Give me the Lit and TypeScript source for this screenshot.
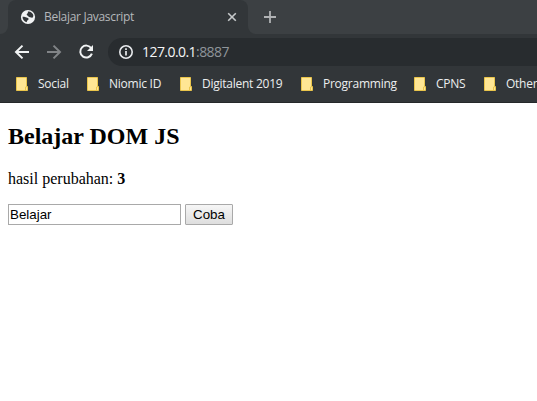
import { LitElement, html, css, svg } from "lit";
import { customElement } from "lit/decorators.js";

const folders = [
  { name: "Social", width: 71 },
  { name: "Niomic ID", width: 93 },
  { name: "Digitalent 2019", width: 121 },
  { name: "Programming", width: 113 },
  { name: "CPNS", width: 70 },
  { name: "Other", width: 53 },
];

const icon = (cls: string, box: number, body: unknown) =>
  html`<svg class=${cls} width=${box} height=${box} viewBox="0 0 ${box} ${box}" fill="none">${body}</svg>`;

@customElement("browser-chrome")
class BrowserChrome extends LitElement {
  static styles = css`
    :host { display: block; height: 103px; box-sizing: border-box; background: #323639; border-bottom: 1px solid #25282a; font: 12px/16px "Open Sans", "Noto Sans", sans-serif; overflow: hidden; }
    svg { display: block; flex: none; }
    .tabs { display: flex; height: 34px; background: #323639; }
    .before { width: 8px; background: #3c4043; border-bottom-right-radius: 8px; }
    .tab { width: 240px; box-sizing: border-box; display: flex; align-items: center; padding: 0 10px 0 12px; background: #323639; color: #b5b8bb; }
    .tabwrap { background: linear-gradient(#3c4043 0 10px, #323639 10px); }
    .tabwrap .tab { height: 34px; border-radius: 8px 8px 0 0; }
    .title { margin-left: 8px; flex: 1; letter-spacing: -0.3px; white-space: nowrap; }
    .after { flex: 1; background: #3c4043; border-bottom-left-radius: 8px; padding: 10px 0 0 15px; }
    .toolbar { display: flex; align-items: center; height: 36px; padding-left: 14px; }
    .forward { margin-left: 16px; }
    .reload { margin-left: 16px; }
    .address { flex: 1; height: 28px; margin-left: 14px; padding-left: 10px; border-radius: 14px 0 0 14px; background: #282c2f; display: flex; align-items: center; color: #f4f5f6; font-size: 14px; }
    .url { margin-left: 8px; letter-spacing: -0.56px; white-space: nowrap; }
    .port { color: #8f959a; }
    .bookmarks { display: flex; height: 28px; padding-left: 16px; align-items: center; color: #eceeef; white-space: nowrap; }
    .folder { display: flex; align-items: center; flex: none; }
    .label { margin-left: 10px; letter-spacing: -0.25px; }
  `;

  render() {
    return html`
      <div class="tabs">
        <div class="before"></div>
        <div class="tabwrap"><div class="tab">
          ${icon("globe", 16, svg`<circle cx="8" cy="8" r="7.100" fill="#f1f3f4"/><path d="M7.800 2.700C9.600 2 12.300 3.400 13.200 5.800 13.500 7 13.200 8.300 12.300 8.800 11.500 9 10.900 8.300 10 8.200 9 8 8.200 7.600 8 6.700 6.900 6.500 6.400 5.700 6.900 5 7.400 4.300 8.300 4.100 7.800 2.700ZM2.500 7.800C3.800 7.600 5.500 8 6.500 8.600 7.800 9 8.900 9.300 8.600 10.300 8.300 11.200 7.200 11.200 7 12.200L6.600 13.300C4.300 12.700 2.500 10.600 2.500 7.800Z" fill="#323639"/>`)}
          <span class="title">Belajar Javascript</span>
          ${icon("close", 12, svg`<path d="m2.2 2.2 7.6 7.6m0-7.6L2.2 9.8" stroke="#c6c9cb" stroke-width="1.600"/>`)}
        </div></div>
        <div class="after">${icon("plus", 14, svg`<path d="M7 1v12M1 7h12" stroke="#b0b2b4" stroke-width="1.8"/>`)}</div>
      </div>
      <div class="toolbar">
        ${icon("back", 16, svg`<path d="M15 8H2m6.500-6.400L2 8l6.500 6.400" stroke="#f1f3f4" stroke-width="2"/>`)}
        ${icon("forward", 16, svg`<path d="M1 8h13M7.500 1.600 14 8l-6.500 6.400" stroke="#818487" stroke-width="2"/>`)}
        ${icon("reload", 16, svg`<path d="M13.300 4.300A6 6 0 1 0 13.900 9.700" stroke="#f1f3f4" stroke-width="2"/><path d="M15 1v6H9Z" fill="#f1f3f4"/>`)}
        <div class="address">
          ${icon("info", 16, svg`<circle cx="8" cy="8" r="6.200" stroke="#e8eaed" stroke-width="1.600"/><path d="M8 7v4.500M8 4.300v1.700" stroke="#e8eaed" stroke-width="1.700"/>`)}
          <span class="url">127.0.0.1<span class="port">:8887</span></span>
        </div>
      </div>
      <div class="bookmarks">
        ${folders.map((f) => html`<div class="folder" style="width:${f.width}px">
          <svg width="12" height="14" viewBox="0 0 12 14"><path d="M.5.5h10v9h1v4H.5Z" fill="#ffe694" stroke="#eac54b"/><path d="M9.500 13V10h1" fill="none" stroke="#eac54b"/></svg>
          <span class="label">${f.name}</span>
        </div>`)}
      </div>`;
  }
}

@customElement("app-root")
class AppRoot extends LitElement {
  static styles = css`
    :host { display: block; height: 401px; overflow: hidden; background: #fff; color: #000; }
    .page { padding: 20px 8px 0; font: 16px/18px "Liberation Serif", serif; }
    h2 { font-size: 24px; line-height: 27px; margin: 0; }
    p { margin: 20px 0 16px; }
    .row { display: flex; gap: 4px; }
    input, button { box-sizing: border-box; height: 21px; margin: 0; border: 1px solid #a9a9a9; border-radius: 0; font: 13.333px/15px "Liberation Sans", sans-serif; color: #000; }
    input { width: 173px; padding: 1px; background: #fff; outline: none; }
    button { width: 48px; padding: 0; border-radius: 1px; background: linear-gradient(#f6f6f6, #dedede); }
  `;

  render() {
    return html`
      <browser-chrome></browser-chrome>
      <main class="page">
        <h2>Belajar DOM JS</h2>
        <p>hasil perubahan: <b>3</b></p>
        <div class="row"><input type="text" .value=${"Belajar"}><button>Coba</button></div>
      </main>`;
  }
}
